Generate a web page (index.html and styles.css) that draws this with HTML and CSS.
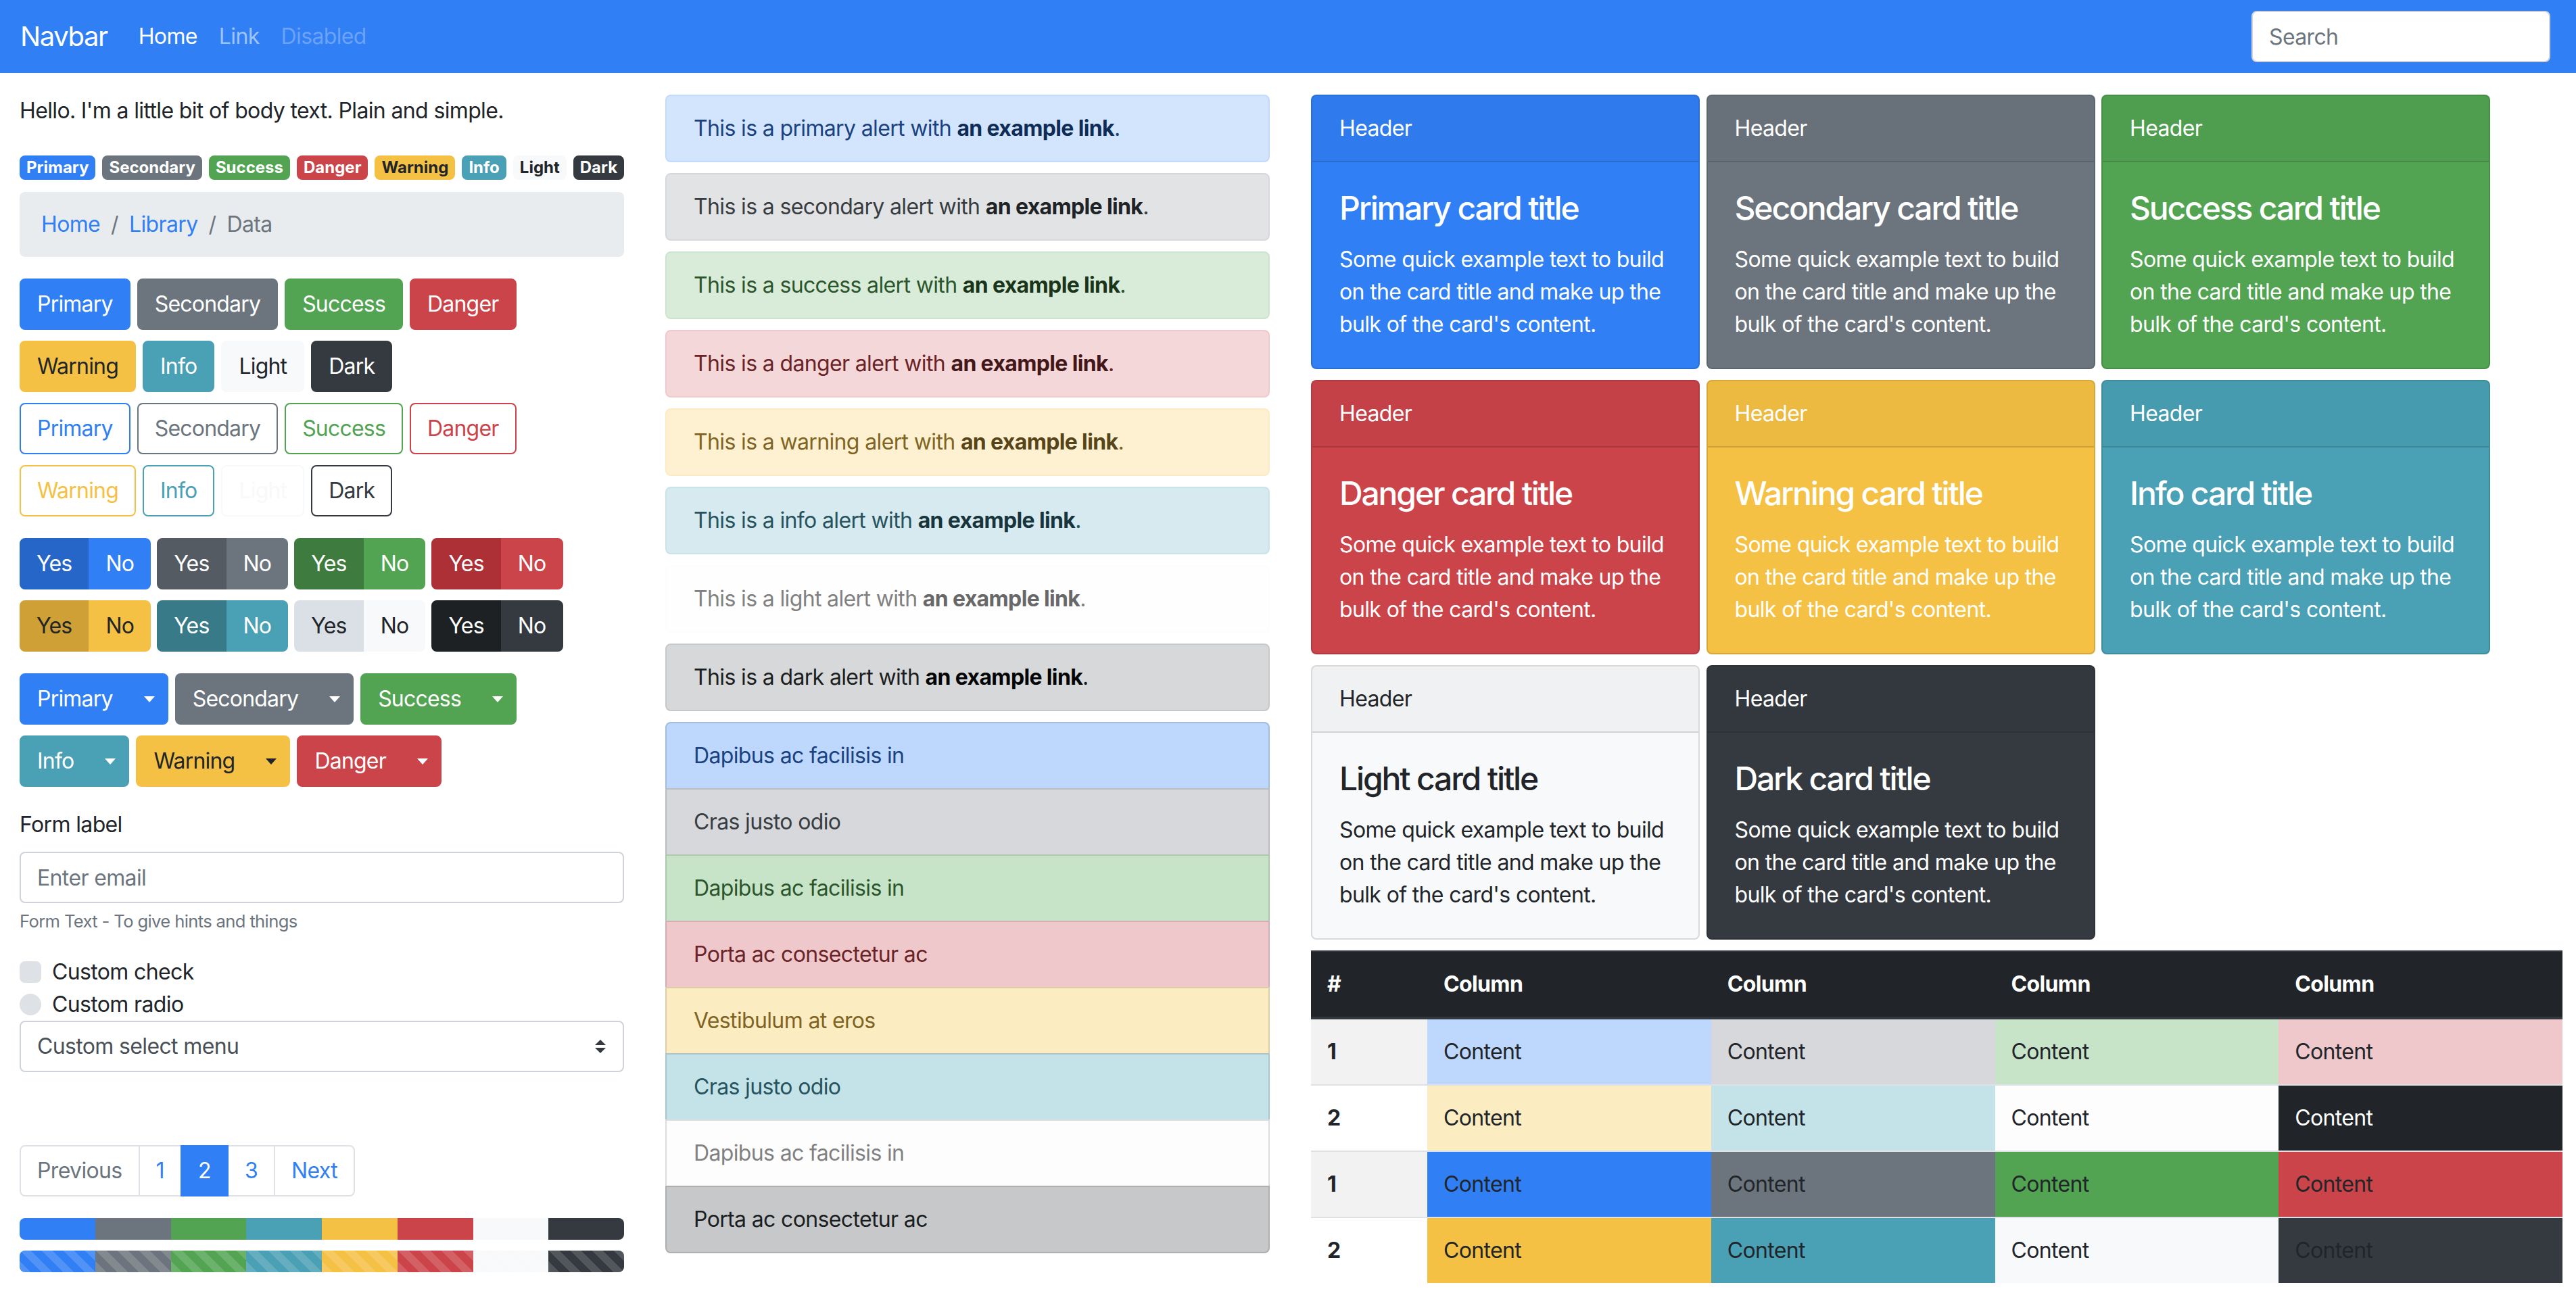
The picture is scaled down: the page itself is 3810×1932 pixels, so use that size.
FILE: index.html
```html
<!DOCTYPE html>
<html lang="en">
<head>
<meta charset="utf-8">
<title>Theme preview</title>
<link rel="stylesheet" href="styles.css">
</head>
<body>
<nav class="navbar">
  <a class="brand">Navbar</a>
  <ul class="nav">
    <li class="nav-link active">Home</li>
    <li class="nav-link">Link</li>
    <li class="nav-link disabled">Disabled</li>
  </ul>
  <input class="search" type="text" placeholder="Search">
</nav>

<main class="page">
  <section class="col">
    <p class="intro">Hello. I'm a little bit of body text. Plain and simple.</p>

    <div class="badges">
      <span class="badge primary">Primary</span>
      <span class="badge secondary">Secondary</span>
      <span class="badge success">Success</span>
      <span class="badge danger">Danger</span>
      <span class="badge warning">Warning</span>
      <span class="badge info">Info</span>
      <span class="badge light">Light</span>
      <span class="badge dark">Dark</span>
    </div>

    <ol class="breadcrumb">
      <li class="crumb link">Home</li>
      <li class="crumb-sep">/</li>
      <li class="crumb link">Library</li>
      <li class="crumb-sep">/</li>
      <li class="crumb current">Data</li>
    </ol>

    <div class="stack">
      <div class="row">
        <button class="btn solid primary">Primary</button>
        <button class="btn solid secondary">Secondary</button>
        <button class="btn solid success">Success</button>
        <button class="btn solid danger">Danger</button>
      </div>
      <div class="row">
        <button class="btn solid warning">Warning</button>
        <button class="btn solid info">Info</button>
        <button class="btn solid light">Light</button>
        <button class="btn solid dark">Dark</button>
      </div>
      <div class="row">
        <button class="btn outline primary">Primary</button>
        <button class="btn outline secondary">Secondary</button>
        <button class="btn outline success">Success</button>
        <button class="btn outline danger">Danger</button>
      </div>
      <div class="row">
        <button class="btn outline warning">Warning</button>
        <button class="btn outline info">Info</button>
        <button class="btn outline light">Light</button>
        <button class="btn outline dark">Dark</button>
      </div>
    </div>

    <div class="stack">
      <div class="row tight">
        <div class="btn-group primary"><button class="btn active">Yes</button><button class="btn solid">No</button></div>
        <div class="btn-group secondary"><button class="btn active">Yes</button><button class="btn solid">No</button></div>
        <div class="btn-group success"><button class="btn active">Yes</button><button class="btn solid">No</button></div>
        <div class="btn-group danger"><button class="btn active">Yes</button><button class="btn solid">No</button></div>
      </div>
      <div class="row tight">
        <div class="btn-group warning"><button class="btn active">Yes</button><button class="btn solid">No</button></div>
        <div class="btn-group info"><button class="btn active">Yes</button><button class="btn solid">No</button></div>
        <div class="btn-group light"><button class="btn active">Yes</button><button class="btn solid">No</button></div>
        <div class="btn-group dark"><button class="btn active">Yes</button><button class="btn solid">No</button></div>
      </div>
    </div>

    <div class="stack">
      <div class="row">
        <div class="split primary"><button class="btn solid">Primary</button><button class="btn solid toggle"><span class="caret"></span></button></div>
        <div class="split secondary"><button class="btn solid">Secondary</button><button class="btn solid toggle"><span class="caret"></span></button></div>
        <div class="split success"><button class="btn solid">Success</button><button class="btn solid toggle"><span class="caret"></span></button></div>
      </div>
      <div class="row">
        <div class="split info"><button class="btn solid">Info</button><button class="btn solid toggle"><span class="caret"></span></button></div>
        <div class="split warning"><button class="btn solid">Warning</button><button class="btn solid toggle"><span class="caret"></span></button></div>
        <div class="split danger"><button class="btn solid">Danger</button><button class="btn solid toggle"><span class="caret"></span></button></div>
      </div>
    </div>

    <div class="form">
      <label class="form-label">Form label</label>
      <input class="form-control" type="text" placeholder="Enter email">
      <div class="form-text">Form Text - To give hints and things</div>
      <div class="checks">
        <div class="check"><span class="check-box"></span><span>Custom check</span></div>
        <div class="check"><span class="check-box round"></span><span>Custom radio</span></div>
      </div>
      <div class="select">
        <span>Custom select menu</span>
        <svg class="select-arrow" viewBox="0 0 4 5" width="16" height="20"><path d="M2 0L0 2h4zm0 5L0 3h4z" fill="#343a40"/></svg>
      </div>
    </div>

    <ul class="pagination">
      <li class="page-link disabled">Previous</li>
      <li class="page-link">1</li>
      <li class="page-link current">2</li>
      <li class="page-link">3</li>
      <li class="page-link">Next</li>
    </ul>

    <div class="progress">
      <div class="bar primary"></div><div class="bar secondary"></div><div class="bar success"></div><div class="bar info"></div>
      <div class="bar warning"></div><div class="bar danger"></div><div class="bar light"></div><div class="bar dark"></div>
    </div>
    <div class="progress striped">
      <div class="bar primary"></div><div class="bar secondary"></div><div class="bar success"></div><div class="bar info"></div>
      <div class="bar warning"></div><div class="bar danger"></div><div class="bar light"></div><div class="bar dark"></div>
    </div>
  </section>

  <section class="col">
    <div class="alert a-primary">This is a primary alert with <b>an example link</b>.</div>
    <div class="alert a-secondary">This is a secondary alert with <b>an example link</b>.</div>
    <div class="alert a-success">This is a success alert with <b>an example link</b>.</div>
    <div class="alert a-danger">This is a danger alert with <b>an example link</b>.</div>
    <div class="alert a-warning">This is a warning alert with <b>an example link</b>.</div>
    <div class="alert a-info">This is a info alert with <b>an example link</b>.</div>
    <div class="alert a-light">This is a light alert with <b>an example link</b>.</div>
    <div class="alert a-dark">This is a dark alert with <b>an example link</b>.</div>

    <ul class="list-group">
      <li class="list-item l-primary">Dapibus ac facilisis in</li>
      <li class="list-item l-secondary">Cras justo odio</li>
      <li class="list-item l-success">Dapibus ac facilisis in</li>
      <li class="list-item l-danger">Porta ac consectetur ac</li>
      <li class="list-item l-warning">Vestibulum at eros</li>
      <li class="list-item l-info">Cras justo odio</li>
      <li class="list-item l-light">Dapibus ac facilisis in</li>
      <li class="list-item l-dark">Porta ac consectetur ac</li>
    </ul>
  </section>

  <section class="col">
    <div class="cards">
      <div class="card primary"><div class="card-header">Header</div><div class="card-body"><h4 class="card-title">Primary card title</h4><p class="card-text">Some quick example text to build on the card title and make up the bulk of the card's content.</p></div></div>
      <div class="card secondary"><div class="card-header">Header</div><div class="card-body"><h4 class="card-title">Secondary card title</h4><p class="card-text">Some quick example text to build on the card title and make up the bulk of the card's content.</p></div></div>
      <div class="card success"><div class="card-header">Header</div><div class="card-body"><h4 class="card-title">Success card title</h4><p class="card-text">Some quick example text to build on the card title and make up the bulk of the card's content.</p></div></div>
      <div class="card danger"><div class="card-header">Header</div><div class="card-body"><h4 class="card-title">Danger card title</h4><p class="card-text">Some quick example text to build on the card title and make up the bulk of the card's content.</p></div></div>
      <div class="card warning"><div class="card-header">Header</div><div class="card-body"><h4 class="card-title">Warning card title</h4><p class="card-text">Some quick example text to build on the card title and make up the bulk of the card's content.</p></div></div>
      <div class="card info"><div class="card-header">Header</div><div class="card-body"><h4 class="card-title">Info card title</h4><p class="card-text">Some quick example text to build on the card title and make up the bulk of the card's content.</p></div></div>
      <div class="card light"><div class="card-header">Header</div><div class="card-body"><h4 class="card-title">Light card title</h4><p class="card-text">Some quick example text to build on the card title and make up the bulk of the card's content.</p></div></div>
      <div class="card dark"><div class="card-header">Header</div><div class="card-body"><h4 class="card-title">Dark card title</h4><p class="card-text">Some quick example text to build on the card title and make up the bulk of the card's content.</p></div></div>
    </div>

    <table class="table">
      <thead>
        <tr><th class="num">#</th><th>Column</th><th>Column</th><th>Column</th><th>Column</th></tr>
      </thead>
      <tbody>
        <tr class="odd"><th>1</th><td class="t-primary">Content</td><td class="t-secondary">Content</td><td class="t-success">Content</td><td class="t-danger">Content</td></tr>
        <tr><th>2</th><td class="t-warning">Content</td><td class="t-info">Content</td><td class="t-light">Content</td><td class="t-dark">Content</td></tr>
        <tr class="odd"><th>1</th><td class="bg-primary">Content</td><td class="bg-secondary">Content</td><td class="bg-success">Content</td><td class="bg-danger">Content</td></tr>
        <tr><th>2</th><td class="bg-warning">Content</td><td class="bg-info">Content</td><td class="bg-light">Content</td><td class="bg-dark">Content</td></tr>
      </tbody>
    </table>
  </section>
</main>
</body>
</html>
```

FILE: styles.css
```css
* { box-sizing: border-box; }

html, body { margin: 0; padding: 0; }

body {
  width: 3810px;
  height: 1932px;
  overflow: hidden;
  font-family: Inter, "Helvetica Neue", Arial, sans-serif;
  font-size: 32px;
  line-height: 48px;
  letter-spacing: -0.02em;
  color: #212529;
  background: #fff;
}

/* theme variants */
.primary   { --c: #317ff5; --cd: #2566c8; --fg: #fff; }
.secondary { --c: #6c757d; --cd: #545b62; --fg: #fff; }
.success   { --c: #52a452; --cd: #3e7b3e; --fg: #fff; }
.danger    { --c: #cb444a; --cd: #ad3036; --fg: #fff; }
.warning   { --c: #f5c144; --cd: #cea036; --fg: #212529; }
.info      { --c: #4aa0b4; --cd: #387a88; --fg: #fff; }
.light     { --c: #f8f9fa; --cd: #dae0e5; --fg: #212529; }
.dark      { --c: #343a40; --cd: #1d2124; --fg: #fff; }

/* navbar */
.navbar {
  height: 108px;
  background: #317ff5;
  display: flex;
  align-items: center;
  padding: 0 38px 0 30px;
}
.brand { font-size: 40px; line-height: 60px; color: #fff; margin-right: 30px; letter-spacing: -0.035em; }
.nav { display: flex; list-style: none; margin: 0; padding: 0; }
.nav-link { padding: 0 16px; color: rgba(255, 255, 255, .55); }
.nav-link.active { color: #fff; }
.nav-link.disabled { color: rgba(255, 255, 255, .28); }
.search {
  margin-left: auto;
  width: 442px;
  height: 76px;
  padding: 0 24px;
  border: 2px solid #ced4da;
  border-radius: 8px;
  background: #fff;
  font: inherit;
  letter-spacing: inherit;
  color: #495057;
}
.search::placeholder { color: #6c757d; }

/* page grid */
.page {
  display: grid;
  grid-template-columns: 894px 894px 1851px;
  column-gap: 61px;
  align-items: start;
  padding: 32px 0 0 29px;
}
.col { min-width: 0; }

.intro { margin: 0; }

/* badges */
.badges { display: flex; gap: 10px; margin-top: 42px; }
.badge {
  font-size: 24px;
  font-weight: 700;
  line-height: 24px;
  letter-spacing: 0;
  padding: 6px 10px;
  border-radius: 8px;
  background: var(--c);
  color: var(--fg);
}

/* breadcrumb */
.breadcrumb {
  display: flex;
  list-style: none;
  margin: 18px 0 0;
  padding: 24px 32px;
  background: #e9ecef;
  border-radius: 8px;
}
.crumb.link { color: #317ff5; }
.crumb.current, .crumb-sep { color: #6c757d; }
.crumb-sep { padding: 0 16px; }

/* buttons */
.stack { display: flex; flex-direction: column; gap: 16px; margin-top: 32px; }
.row { display: flex; gap: 10px; }
.row.tight { gap: 9px; }

.btn {
  font: inherit;
  font-size: 32px;
  line-height: 48px;
  letter-spacing: -0.025em;
  padding: 12px 24px;
  border: 2px solid transparent;
  border-radius: 8px;
  cursor: pointer;
}
.btn.solid { background: var(--c); border-color: var(--c); color: var(--fg); }
.btn.outline { background: #fff; border-color: var(--c); color: var(--c); }
.btn.active { background: var(--cd); border-color: var(--cd); color: var(--fg); }

.btn-group, .split { display: inline-flex; }
.btn-group .btn, .split .btn { border-radius: 0; }
.btn-group .btn { padding: 12px 23px; }
.btn-group .btn:first-child, .split .btn:first-child { border-radius: 8px 0 0 8px; }
.btn-group .btn:last-child, .split .btn:last-child { border-radius: 0 8px 8px 0; }

.split .toggle { display: flex; align-items: center; padding: 12px 18px; }
.caret {
  width: 0;
  height: 0;
  border-top: 9px solid currentColor;
  border-left: 8px solid transparent;
  border-right: 8px solid transparent;
}

/* form */
.form-label { display: block; margin-top: 32px; }
.form-control {
  display: block;
  width: 100%;
  height: 76px;
  margin-top: 16px;
  padding: 0 24px;
  border: 2px solid #ced4da;
  border-radius: 8px;
  font: inherit;
  letter-spacing: inherit;
  color: #495057;
}
.form-control::placeholder { color: #6c757d; }
.form-text { margin-top: 8px; font-size: 25.6px; line-height: 38px; color: #6c757d; }

.checks { margin-top: 32px; }
.check { display: flex; align-items: center; gap: 16px; height: 48px; }
.check-box { width: 32px; height: 32px; border-radius: 8px; background: #dee2e6; }
.check-box.round { border-radius: 50%; }

.select {
  display: flex;
  align-items: center;
  justify-content: space-between;
  height: 76px;
  padding: 0 25px 0 24px;
  border: 2px solid #ced4da;
  border-radius: 8px;
  color: #495057;
}

/* pagination */
.pagination { display: flex; list-style: none; margin: 108px 0 0; padding: 0; }
.page-link {
  padding: 16px 24px;
  line-height: 40px;
  border: 2px solid #dee2e6;
  margin-left: -2px;
  color: #317ff5;
  background: #fff;
}
.page-link:first-child { margin-left: 0; border-radius: 8px 0 0 8px; }
.page-link:last-child { border-radius: 0 8px 8px 0; }
.page-link.disabled { color: #6c757d; }
.page-link.current { background: #317ff5; border-color: #317ff5; color: #fff; position: relative; }

/* progress */
.progress {
  display: flex;
  height: 32px;
  margin-top: 32px;
  border-radius: 8px;
  overflow: hidden;
  background: #e9ecef;
}
.progress + .progress { margin-top: 16px; }
.bar { flex: 1; background-color: var(--c); }
.striped .bar {
  background-image: linear-gradient(45deg, rgba(255,255,255,.15) 25%, transparent 25%, transparent 50%, rgba(255,255,255,.15) 50%, rgba(255,255,255,.15) 75%, transparent 75%, transparent);
  background-size: 32px 32px;
}

/* alerts */
.alert {
  padding: 24px 40px;
  border: 2px solid;
  border-radius: 8px;
  margin-bottom: 16px;
}
.alert b { font-weight: 700; }
.a-primary   { background: #d3e4fd; border-color: #c3dafc; color: #1a4280; }
.a-primary b { color: #0f2c57; }
.a-secondary { background: #e2e3e5; border-color: #d6d8db; color: #383d41; }
.a-secondary b { color: #202326; }
.a-success   { background: #d9ebd9; border-color: #cbe4cb; color: #2b552b; }
.a-success b { color: #1a341a; }
.a-danger    { background: #f4d7d9; border-color: #f0c9cc; color: #6a2326; }
.a-danger b  { color: #431618; }
.a-warning   { background: #fdf1d1; border-color: #fcebc3; color: #7f6423; }
.a-warning b { color: #574418; }
.a-info      { background: #d6eaef; border-color: #c9e3e9; color: #26535e; }
.a-info b    { color: #18353c; }
.a-light     { background: #fefefe; border-color: #fdfdfe; color: #818182; }
.a-light b   { color: #686868; }
.a-dark      { background: #d6d8d9; border-color: #c6c8ca; color: #1b1e21; }
.a-dark b    { color: #040505; }

/* list group */
.list-group { list-style: none; margin: 0; padding: 0; display: flex; flex-direction: column; }
.list-item {
  padding: 24px 40px;
  border: 2px solid rgba(0, 0, 0, .125);
}
.list-item + .list-item { margin-top: -2px; }
.list-item:first-child { border-radius: 8px 8px 0 0; }
.list-item:last-child { border-radius: 0 0 8px 8px; }
.l-primary   { background: #bdd8fc; color: #1a4280; }
.l-secondary { background: #d6d8db; color: #383d41; }
.l-success   { background: #c8e4c8; color: #2b552b; }
.l-danger    { background: #efc8cc; color: #6a2326; }
.l-warning   { background: #fcecc2; color: #7f6423; }
.l-info      { background: #c4e3e8; color: #26535e; }
.l-light     { background: #fdfdfd; color: #818182; }
.l-dark      { background: #c6c8ca; color: #1b1e21; }

/* cards */
.cards {
  display: grid;
  grid-template-columns: repeat(3, 575px);
  column-gap: 9.5px;
  row-gap: 16px;
}
.card {
  background: var(--c);
  color: #fff;
  border: 2px solid rgba(0, 0, 0, .125);
  border-radius: 8px;
  overflow: hidden;
}
.card.light { color: #212529; }
.card-header {
  padding: 24px 40px;
  background: rgba(0, 0, 0, .03);
  border-bottom: 2px solid rgba(0, 0, 0, .125);
}
.card-body { padding: 40px; }
.card-title { margin: 0 0 24px; font-size: 48px; line-height: 56px; font-weight: 500; letter-spacing: -0.045em; }
.card-text { margin: 0; }

/* table */
.table {
  width: 100%;
  margin-top: 16px;
  border-collapse: collapse;
}
.table th, .table td {
  padding: 24px;
  text-align: left;
  line-height: 48px;
}
.table thead th {
  background: #212529;
  color: #fff;
  font-weight: 700;
  border-top: 2px solid #32383e;
  border-bottom: 4px solid #32383e;
}
.table th.num { width: 172px; }
.table tbody th, .table tbody td { border-top: 2px solid #dee2e6; }
.table tbody th { font-weight: 700; }
.table tr.odd th { background: #f2f2f2; }

.t-primary   { background: #bdd8fc; }
.t-secondary { background: #d6d8db; }
.t-success   { background: #c8e4c8; }
.t-danger    { background: #efc8cc; }
.t-warning   { background: #fcecc2; }
.t-info      { background: #c4e3e8; }
.t-light     { background: #fdfdfe; }
.t-dark      { background: #212529; color: #fff; }

.bg-primary   { background: #317ff5; }
.bg-secondary { background: #6c757d; }
.bg-success   { background: #52a452; }
.bg-danger    { background: #cb444a; }
.bg-warning   { background: #f5c144; }
.bg-info      { background: #4aa0b4; }
.bg-light     { background: #f8f9fa; }
.bg-dark      { background: #343a40; }
```
